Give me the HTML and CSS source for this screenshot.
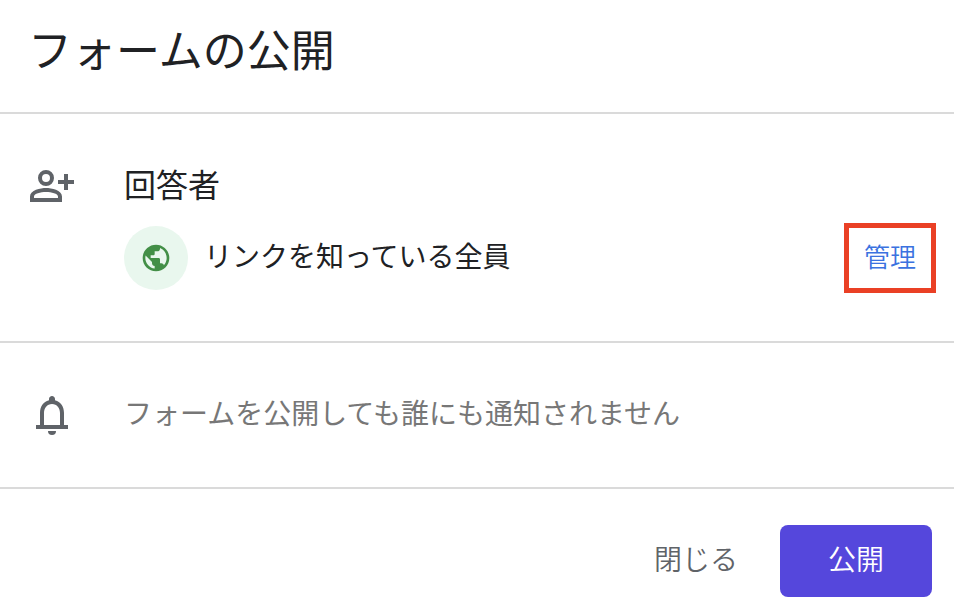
FILE: index.html
```html
<!DOCTYPE html>
<html lang="ja">
<head>
    <meta charset="UTF-8">
    <meta name="viewport" content="width=device-width, initial-scale=1.0">
    <title>フォームの公開</title>
    <link rel="stylesheet" href="styles.css">
</head>
<body>

<main class="dialog">
    <header class="dialog-header">
        <h1>フォームの公開</h1>
    </header>

    <!-- 回答者 -->
    <section class="row responders">
        <svg class="icon" viewBox="0 0 24 24" aria-hidden="true">
            <path fill-rule="evenodd" d="M9 4a4 4 0 1 0 0 8 4 4 0 0 0 0-8zm0 2a2 2 0 1 1 0 4 2 2 0 0 1 0-4zM9 13c-2.67 0-8 1-8 4.200V20h16v-2.800C17 14 11.670 13 9 13zm6 5H3v-.8C3 15.800 6.300 15 9 15s6 .8 6 2.200V18z"/>
            <path d="M20 6h-2v3h-3v2h3v3h2v-3h3V9h-3z"/>
        </svg>
        <div class="row-body">
            <h2>回答者</h2>
            <div class="access">
                <span class="badge">
                    <svg viewBox="0 0 24 24" aria-hidden="true">
                        <path d="M12 2C6.480 2 2 6.480 2 12s4.480 10 10 10 10-4.480 10-10S17.520 2 12 2zm-1 17.930c-3.950-.49-7-3.850-7-7.930 0-.62.080-1.210.210-1.790L9 15v1c0 1.100.900 2 2 2v1.930zm6.900-2.540c-.260-.810-1-1.390-1.900-1.390h-1v-3c0-.550-.450-1-1-1H8v-2h2c.550 0 1-.450 1-1V7h2c1.100 0 2-.900 2-2v-.410c2.930 1.190 5 4.060 5 7.410 0 2.080-.800 3.970-2.100 5.390z"/>
                    </svg>
                </span>
                <span class="access-label">リンクを知っている全員</span>
                <button type="button" class="manage">管理</button>
            </div>
        </div>
    </section>

    <!-- 通知 -->
    <section class="row notice">
        <svg class="icon" viewBox="0 0 24 24" aria-hidden="true">
            <path fill-rule="evenodd" d="M18 17v-6c0-3.070-1.640-5.640-4.500-6.320V4c0-.83-.67-1.500-1.500-1.500s-1.500.67-1.500 1.500v.68C7.630 5.360 6 7.920 6 11v6H4v2h16v-2h-2zm-2 0H8v-6c0-2.480 1.510-4.500 4-4.500s4 2.020 4 4.500v6z"/>
            <path d="M10 20h4a2 2 0 0 1-4 0z"/>
        </svg>
        <p>フォームを公開しても誰にも通知されません</p>
    </section>

    <footer class="actions">
        <button type="button" class="close">閉じる</button>
        <button type="button" class="publish">公開</button>
    </footer>
</main>

</body>
</html>
```
FILE: styles.css
```css
* { box-sizing: border-box; }

body {
    margin: 0;
    background-color: #fff;
    color: #202124;
    font-family: "Noto Sans CJK JP", sans-serif;
}

h1, h2, p { margin: 0; font-weight: 400; }

button {
    font-family: inherit;
    font-weight: 350;
    cursor: pointer;
}

.dialog-header {
    padding: 16px 28px 32px;
}

.dialog-header h1 {
    font-size: 44px;
    line-height: 64px;
}

/* ダイアログの行 */
.row {
    display: flex;
    gap: 48px;
    padding-left: 28px;
    border-top: 2px solid #dadada;
}

.icon {
    flex: none;
    width: 48px;
    height: 48px;
    fill: #5f6368;
}

/* 回答者 */
.responders {
    padding-top: 48px;
    padding-right: 18px;
    padding-bottom: 48px;
}

.row-body { flex: 1; }

.row-body h2 {
    font-size: 32px;
    line-height: 42px;
}

.access {
    display: flex;
    align-items: center;
    gap: 16px;
    margin-top: 19px;
}

.badge {
    display: flex;
    align-items: center;
    justify-content: center;
    width: 64px;
    height: 64px;
    border-radius: 50%;
    background-color: #e9f7ee;
}

.badge svg {
    width: 32px;
    height: 32px;
    fill: #438f47;
}

.access-label {
    padding-bottom: 6px;
    font-size: 28px;
    line-height: 40px;
}

.manage {
    margin-left: auto;
    padding: 6px 15px 10px;
    border: 5px solid #ea4025;
    background-color: #fff;
    color: #3b72e0;
    font-size: 26px;
    line-height: 44px;
}

/* 通知 */
.notice {
    align-items: center;
    padding-top: 48px;
    padding-bottom: 48px;
}

.notice p {
    padding-bottom: 6px;
    color: #777;
    font-size: 28px;
    line-height: 40px;
}

/* ボタン */
.actions {
    display: flex;
    justify-content: flex-end;
    gap: 24px;
    padding: 36px 22px 12px;
    border-top: 2px solid #dadada;
}

.actions button {
    height: 72px;
    border: none;
    border-radius: 8px;
    font-size: 28px;
}

.actions .close {
    padding: 0 18px 6px;
    background: none;
    color: #5f6368;
}

.actions .publish {
    padding: 0 48px 6px;
    background-color: #5547dc;
    color: #fff;
}
```
